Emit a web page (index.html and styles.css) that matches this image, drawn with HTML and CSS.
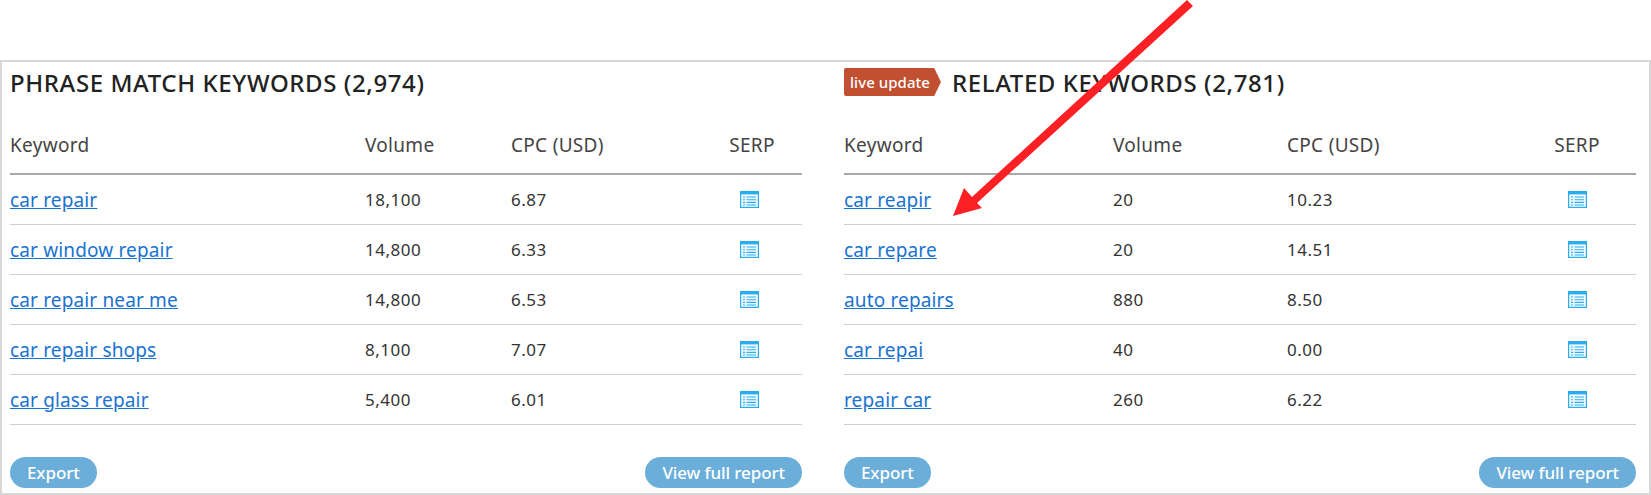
FILE: index.html
```html
<!DOCTYPE html>
<html lang="en">
<head>
<meta charset="utf-8">
<title>Keywords</title>
<link rel="stylesheet" href="styles.css">
</head>
<body>
<svg width="0" height="0" class="defs" aria-hidden="true">
  <symbol id="serp" viewBox="0 0 19 17">
    <rect x="0.6" y="0.6" width="17.8" height="15.8" fill="#f4fbff" stroke="#28aeee" stroke-width="1.2"/>
    <rect x="1" y="1" width="17" height="2.4" fill="#28aeee"/>
    <path d="M3 6h2M6.5 6h9.5M3 8.7h2M6.5 8.7h9.5M3 11.4h2M6.5 11.4h9.5M3 14h2M6.5 14h9.5" stroke="#28aeee" stroke-width="1.1" fill="none"/>
  </symbol>
</svg>
<main class="frame">
  <section class="panel">
    <h2 class="title">PHRASE MATCH KEYWORDS (2,974)</h2>
    <div class="row head left-cols"><span>Keyword</span><span>Volume</span><span>CPC (USD)</span><span class="serp">SERP</span></div>
    <div class="row left-cols"><a href="#">car repair</a><span>18,100</span><span>6.87</span><span class="serp"><svg class="icon"><use href="#serp"/></svg></span></div>
    <div class="row left-cols"><a href="#">car window repair</a><span>14,800</span><span>6.33</span><span class="serp"><svg class="icon"><use href="#serp"/></svg></span></div>
    <div class="row left-cols"><a href="#">car repair near me</a><span>14,800</span><span>6.53</span><span class="serp"><svg class="icon"><use href="#serp"/></svg></span></div>
    <div class="row left-cols"><a href="#">car repair shops</a><span>8,100</span><span>7.07</span><span class="serp"><svg class="icon"><use href="#serp"/></svg></span></div>
    <div class="row left-cols"><a href="#">car glass repair</a><span>5,400</span><span>6.01</span><span class="serp"><svg class="icon"><use href="#serp"/></svg></span></div>
    <div class="actions"><button class="btn">Export</button><button class="btn">View full report</button></div>
  </section>
  <section class="panel">
    <h2 class="title"><span class="badge">live update</span>RELATED KEYWORDS (2,781)</h2>
    <div class="row head right-cols"><span>Keyword</span><span>Volume</span><span>CPC (USD)</span><span class="serp">SERP</span></div>
    <div class="row right-cols"><a href="#">car reapir</a><span>20</span><span>10.23</span><span class="serp"><svg class="icon"><use href="#serp"/></svg></span></div>
    <div class="row right-cols"><a href="#">car repare</a><span>20</span><span>14.51</span><span class="serp"><svg class="icon"><use href="#serp"/></svg></span></div>
    <div class="row right-cols"><a href="#">auto repairs</a><span>880</span><span>8.50</span><span class="serp"><svg class="icon"><use href="#serp"/></svg></span></div>
    <div class="row right-cols"><a href="#">car repai</a><span>40</span><span>0.00</span><span class="serp"><svg class="icon"><use href="#serp"/></svg></span></div>
    <div class="row right-cols"><a href="#">repair car</a><span>260</span><span>6.22</span><span class="serp"><svg class="icon"><use href="#serp"/></svg></span></div>
    <div class="actions"><button class="btn">Export</button><button class="btn">View full report</button></div>
  </section>
</main>
<svg class="arrow" width="1651" height="495" viewBox="0 0 1651 495" aria-hidden="true">
  <polygon points="1187,0 1193,6 977,203 982,208 953,216 964,188 972,197" fill="#fb2024"/>
</svg>
</body>
</html>
```
FILE: styles.css
```css
* { box-sizing: border-box; }
html, body { margin: 0; padding: 0; }
body {
  position: relative;
  width: 1651px;
  height: 495px;
  overflow: hidden;
  background: #fff;
  font-family: "Noto Sans", "Open Sans", sans-serif;
  color: #333;
  padding-top: 60px;
}
.defs { position: absolute; }
.frame {
  display: flex;
  gap: 42px;
  width: 1651px;
  height: 435px;
  border: 2px solid #d8d8d8;
  padding: 0 13px 0 8px;
}
.panel { width: 792px; display: flex; flex-direction: column; }
.title {
  display: flex;
  align-items: center;
  height: 40px;
  margin: 0;
  font-size: 24px;
  letter-spacing: 0.6px;
  font-weight: 500;
  color: #222;
  white-space: nowrap;
}
.badge {
  display: flex;
  align-items: center;
  justify-content: center;
  width: 97px;
  height: 28px;
  margin-right: 11px;
  padding-right: 5px;
  background: #c0502f;
  color: #fff;
  font-size: 15px;
  letter-spacing: 0.05px;
  font-weight: 500;
  border-radius: 2px;
  clip-path: polygon(0 0, 93% 0, 100% 50%, 93% 100%, 0 100%);
}
.row {
  display: grid;
  align-items: center;
  height: 50px;
  font-size: 17px;
  letter-spacing: 0.5px;
  border-bottom: 1px solid #d0d0d0;
}
.left-cols { grid-template-columns: 355px 146px 1fr 100px; }
.right-cols { grid-template-columns: 269px 174px 1fr 118px; }
.head {
  height: 73px;
  padding-top: 15px;
  font-size: 19px;
  letter-spacing: 0.3px;
  color: #444;
  border-bottom: 2px solid #a8a8a8;
}
.row a { color: #1a73d0; font-size: 19px; letter-spacing: 0.15px; }
.serp { display: flex; justify-content: center; }
.icon { width: 19px; height: 17px; display: block; }
.left-cols .icon { margin-right: 6px; }
.actions {
  display: flex;
  justify-content: space-between;
  margin-top: 32px;
}
.btn {
  height: 31px;
  padding: 0 17px;
  border: 0;
  border-radius: 16px;
  background: #6aaed9;
  color: #fff;
  letter-spacing: -0.1px;
  font-family: "Noto Sans", "Open Sans", sans-serif;
  font-size: 17px;
  font-weight: 500;
}
.arrow { position: absolute; left: 0; top: 0; pointer-events: none; }
```
